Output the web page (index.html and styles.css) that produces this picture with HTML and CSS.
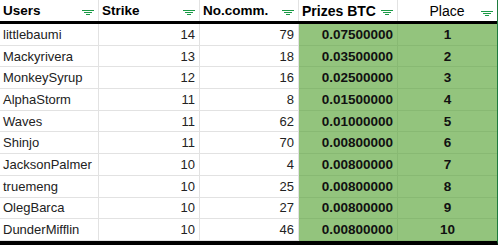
FILE: index.html
```html
<!DOCTYPE html>
<html>
<head>
<meta charset="utf-8">
<link rel="stylesheet" href="styles.css">
</head>
<body>
<div class="sheet">
  <div class="row head">
    <div class="cell h">Users<span class="flt"><i></i><i></i><i></i></span></div>
    <div class="cell h">Strike<span class="flt"><i></i><i></i><i></i></span></div>
    <div class="cell h">No.comm.<span class="flt"><i></i><i></i><i></i></span></div>
    <div class="cell h big">Prizes BTC<span class="flt"><i></i><i></i><i></i></span></div>
    <div class="cell h place">Place<span class="flt"><i></i><i></i><i></i></span></div>
  </div>
  <div class="row"><div class="cell">littlebaumi</div><div class="cell num">14</div><div class="cell num">79</div><div class="cell num g b">0.07500000</div><div class="cell g b c">1</div></div>
  <div class="row"><div class="cell">Mackyrivera</div><div class="cell num">13</div><div class="cell num">18</div><div class="cell num g b">0.03500000</div><div class="cell g b c">2</div></div>
  <div class="row"><div class="cell">MonkeySyrup</div><div class="cell num">12</div><div class="cell num">16</div><div class="cell num g b">0.02500000</div><div class="cell g b c">3</div></div>
  <div class="row"><div class="cell">AlphaStorm</div><div class="cell num">11</div><div class="cell num">8</div><div class="cell num g b">0.01500000</div><div class="cell g b c">4</div></div>
  <div class="row"><div class="cell">Waves</div><div class="cell num">11</div><div class="cell num">62</div><div class="cell num g b">0.01000000</div><div class="cell g b c">5</div></div>
  <div class="row"><div class="cell">Shinjo</div><div class="cell num">11</div><div class="cell num">70</div><div class="cell num g b">0.00800000</div><div class="cell g b c">6</div></div>
  <div class="row"><div class="cell">JacksonPalmer</div><div class="cell num">10</div><div class="cell num">4</div><div class="cell num g b">0.00800000</div><div class="cell g b c">7</div></div>
  <div class="row"><div class="cell">truemeng</div><div class="cell num">10</div><div class="cell num">25</div><div class="cell num g b">0.00800000</div><div class="cell g b c">8</div></div>
  <div class="row"><div class="cell">OlegBarca</div><div class="cell num">10</div><div class="cell num">27</div><div class="cell num g b">0.00800000</div><div class="cell g b c">9</div></div>
  <div class="row"><div class="cell">DunderMifflin</div><div class="cell num">10</div><div class="cell num">46</div><div class="cell num g b">0.00800000</div><div class="cell g b c">10</div></div>
</div>
</body>
</html>
```
FILE: styles.css
```css
html, body {
  margin: 0;
  padding: 0;
  background: #fff;
}
.sheet {
  width: 497px;
  border-right: 1px solid #1e7b3e;
  border-bottom: 4px solid #000;
  font-family: "Liberation Sans", Arial, sans-serif;
  font-size: 13px;
  color: #222;
}
.row {
  display: grid;
  grid-template-columns: 99px 101px 99px 99px 99px;
  height: 21.7px;
}
.row.head {
  height: 21px;
  border-bottom: 3px solid #000;
}
.cell {
  display: flex;
  align-items: center;
  padding: 0 3px;
  border-right: 1px solid #e2e2e2;
  border-bottom: 1px solid #e2e2e2;
  white-space: nowrap;
  overflow: hidden;
  position: relative;
}
.cell:last-child {
  border-right: none;
}
.head .cell {
  border-bottom: none;
  font-weight: bold;
  font-size: 13.5px;
  color: #000;
  justify-content: space-between;
  padding-right: 4px;
}
.head .big {
  font-size: 14px;
}
.head .place {
  font-weight: normal;
  font-size: 14px;
  justify-content: center;
}
.head .place .flt {
  position: absolute;
  right: 4px;
  top: 8px;
}
.flt {
  display: flex;
  flex-direction: column;
  align-items: center;
  gap: 1px;
  width: 12px;
  margin-top: 3px;
}
.flt i {
  display: block;
  height: 1px;
  background: #1a9a46;
}
.flt i:nth-child(1) { width: 12px; }
.flt i:nth-child(2) { width: 8px; }
.flt i:nth-child(3) { width: 4px; }
.num {
  justify-content: flex-end;
  padding-right: 4px;
}
.g {
  background: #93c47d;
  border-right-color: #88b973;
  border-bottom-color: #88b973;
  color: #111;
}
.b {
  font-weight: bold;
  font-size: 13.5px;
}
.c {
  justify-content: center;
}
```
